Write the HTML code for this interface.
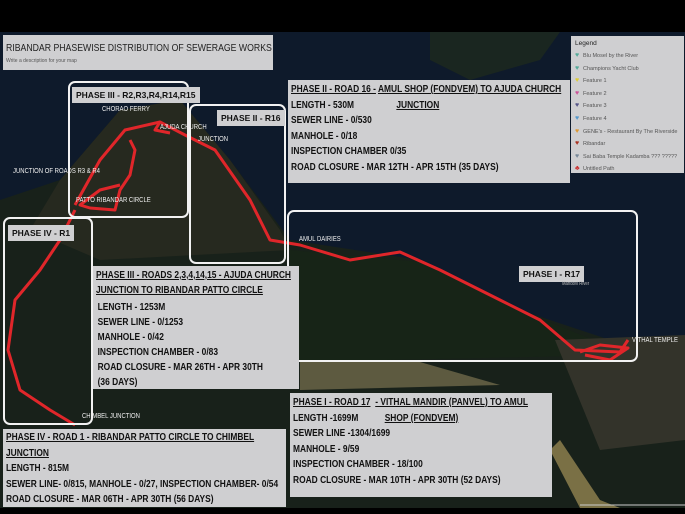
<!DOCTYPE html>
<html><head><meta charset="utf-8"><style>
*{margin:0;padding:0;box-sizing:border-box}
body{width:685px;height:514px;overflow:hidden;background:#000;position:relative;font-family:"Liberation Sans",sans-serif}
.a{position:absolute}
.box{position:absolute;background:#cfcfd1;color:#111;font-weight:bold;font-size:10.5px;line-height:15.5px;padding:2px 3px;white-space:nowrap;overflow:hidden}
.in{transform:scaleX(.8);transform-origin:0 0}
.u{text-decoration:underline}
.ol{position:absolute;border:2px solid #f2f2f2;border-radius:7px}
.lab{position:absolute;background:#cfcfd1;color:#111;font-weight:bold;font-size:8.5px;padding:3px 4px;white-space:nowrap}
.sm{position:absolute;color:#eee;font-size:7px;white-space:nowrap;transform:scaleX(.85);transform-origin:0 0}
.leg{font-size:5.5px;color:#555;line-height:11.6px;white-space:nowrap}
.leg span{display:inline-block;width:8px;font-size:7px}
</style></head><body>
<svg class="a" style="left:0;top:32px" width="685" height="476" viewBox="0 32 685 476">
<rect x="0" y="32" width="685" height="476" fill="#0e1a2b"/>
<path d="M430 32 L560 32 L540 60 L470 80 L430 60Z" fill="#1a2620"/>
<path d="M0 200 L60 180 L120 110 L180 100 L230 160 L290 240 L420 260 L520 310 L640 350 L685 340 L685 508 L0 508Z" fill="#18211a"/>
<path d="M60 180 L120 110 L180 100 L230 160 L280 230 L290 250 L100 260 L30 230Z" fill="#26291f"/>
<path d="M290 250 L420 262 L520 310 L630 355 L290 362Z" fill="#172417"/>
<path d="M300 360 L420 362 L500 385 L300 390Z" fill="#5d5a40"/>
<path d="M560 440 L600 500 L620 508 L580 508 L550 450Z" fill="#7a7045"/>
<path d="M555 340 L685 335 L685 440 L600 450Z" fill="#33332a"/>
<g fill="none" stroke="#e0262a" stroke-width="3" stroke-linejoin="round">
<path d="M75 205 L100 160 L125 130 L160 122 L185 135 L215 150 L250 200 L270 240 L300 245 L350 260 L400 252 L440 270 L500 300 L540 320 L575 350 L620 352 L628 340"/>
<path d="M130 140 L135 150 L130 175 L120 190 L115 210 L90 208 L80 205 L100 190 L120 185"/>
<path d="M160 122 L155 130 L170 133"/>
<path d="M75 210 L60 240 L40 270 L15 300 L8 350 L20 390 L50 410 L75 425"/>
<path d="M580 352 L600 345 L628 348 L610 360 L585 355"/>
</g>
<line x1="580" y1="505" x2="685" y2="505" stroke="#ccc" stroke-width="1"/>
</svg>
<div class="a" style="left:3px;top:35px;width:270px;height:35px;background:#cfcfd1"></div>
<div class="a" style="left:6px;top:42px;font-size:10.5px;color:#222;white-space:nowrap;transform:scaleX(.83);transform-origin:0 0">RIBANDAR PHASEWISE DISTRIBUTION OF SEWERAGE WORKS</div>
<div class="a" style="left:6px;top:58px;font-size:5px;color:#555">Write a description for your map</div>

<div class="a leg" style="left:571px;top:36px;width:113px;height:137px;background:#cfcfd1;padding:2px 4px">
<div style="font-size:6.5px;color:#222;line-height:12px">Legend</div>
<div><span style="color:#5a9">♥</span>Blu Mosel by the River</div>
<div><span style="color:#5a9">♥</span>Champions Yacht Club</div>
<div><span style="color:#dc3">♥</span>Feature 1</div>
<div><span style="color:#c59">♥</span>Feature 2</div>
<div><span style="color:#558">♥</span>Feature 3</div>
<div><span style="color:#59c">♥</span>Feature 4</div>
<div><span style="color:#d93">♥</span>GENE's - Restaurant By The Riverside</div>
<div><span style="color:#a32">♥</span>Ribandar</div>
<div><span style="color:#789">♥</span>Sai Baba Temple Kadamba ??? ?????</div>
<div><span style="color:#c33">♣</span>Untitled Path</div>
</div>

<div class="ol" style="left:68px;top:81px;width:121px;height:137px"></div>
<div class="ol" style="left:189px;top:104px;width:97px;height:160px"></div>
<div class="ol" style="left:287px;top:210px;width:351px;height:152px"></div>
<div class="ol" style="left:3px;top:217px;width:90px;height:208px"></div>

<div class="lab" style="left:72px;top:87px">PHASE III - R2,R3,R4,R14,R15</div>
<div class="lab" style="left:217px;top:110px">PHASE II - R16</div>
<div class="lab" style="left:8px;top:225px">PHASE IV - R1</div>
<div class="lab" style="left:519px;top:266px">PHASE I - R17</div>

<div class="sm" style="left:102px;top:106px">CHORAO FERRY</div>
<div class="sm" style="left:160px;top:124px">AJUDA CHURCH</div>
<div class="sm" style="left:198px;top:136px">JUNCTION</div>
<div class="sm" style="left:13px;top:168px">JUNCTION OF ROADS R3 &amp; R4</div>
<div class="sm" style="left:76px;top:197px">PATTO RIBANDAR CIRCLE</div>
<div class="sm" style="left:299px;top:236px">AMUL DAIRIES</div>
<div class="sm" style="left:632px;top:337px">VITHAL TEMPLE</div>
<div class="sm" style="left:82px;top:413px">CHIMBEL JUNCTION</div>
<div class="sm" style="left:562px;top:281px;font-size:5px;color:#bbb">Mandovi River</div>

<div class="box" style="left:288px;top:80px;width:282px;height:103px">
<div class="in">
<div><span class="u">PHASE II - ROAD 16 -</span> <span class="u">AMUL SHOP (FONDVEM) TO AJUDA CHURCH</span></div>
<div>LENGTH - 530M <span class="u" style="margin-left:50px">JUNCTION</span></div>
<div>SEWER LINE - 0/530</div>
<div>MANHOLE - 0/18</div>
<div>INSPECTION CHAMBER 0/35</div>
<div>ROAD CLOSURE - MAR 12TH - APR 15TH (35 DAYS)</div>
</div></div>

<div class="box" style="left:93px;top:266px;width:206px;height:123px;padding-left:3px;line-height:15px">
<div class="in">
<div class="u">PHASE III - ROADS 2,3,4,14,15 - AJUDA CHURCH</div>
<div class="u">JUNCTION TO RIBANDAR PATTO CIRCLE</div>
<div style="margin-top:2px;padding-left:2px">LENGTH - 1253M<br>SEWER LINE - 0/1253<br>MANHOLE - 0/42<br>INSPECTION CHAMBER - 0/83<br>ROAD CLOSURE - MAR 26TH - APR 30TH<br>(36 DAYS)</div>
</div></div>

<div class="box" style="left:290px;top:393px;width:262px;height:104px">
<div class="in">
<div><span class="u">PHASE I - ROAD 17</span> <span class="u" style="margin-left:3px">- VITHAL MANDIR (PANVEL) TO AMUL</span></div>
<div>LENGTH -1699M <span class="u" style="margin-left:30px">SHOP (FONDVEM)</span></div>
<div>SEWER LINE -1304/1699</div>
<div>MANHOLE - 9/59</div>
<div>INSPECTION CHAMBER - 18/100</div>
<div>ROAD CLOSURE - MAR 10TH - APR 30TH (52 DAYS)</div>
</div></div>

<div class="box" style="left:3px;top:429px;width:283px;height:78px;padding-top:1px">
<div class="in">
<div class="u">PHASE IV - ROAD 1 - RIBANDAR PATTO CIRCLE TO CHIMBEL</div>
<div class="u">JUNCTION</div>
<div>LENGTH - 815M</div>
<div>SEWER LINE- 0/815, MANHOLE - 0/27, INSPECTION CHAMBER- 0/54</div>
<div>ROAD CLOSURE - MAR 06TH - APR 30TH (56 DAYS)</div>
</div></div>
</body></html>
